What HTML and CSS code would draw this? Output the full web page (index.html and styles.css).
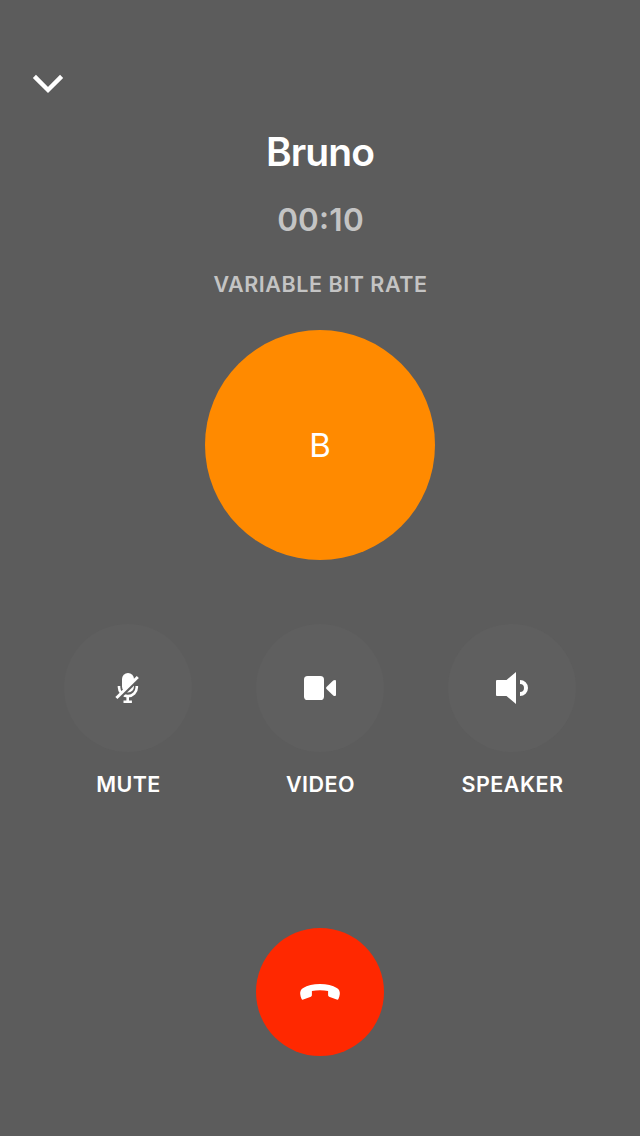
FILE: index.html
```html
<!DOCTYPE html>
<html lang="en">
<head>
<meta charset="utf-8">
<title>Call</title>
<link rel="stylesheet" href="styles.css">
</head>
<body>
<main class="call">
  <button class="minimize" aria-label="Minimize">
    <svg width="32" height="20" viewBox="0 0 32 20"><path d="M2.4 2.4 16 16 29.6 2.4" fill="none" stroke="#fff" stroke-width="4.4"/></svg>
  </button>
  <h1 class="name">Bruno</h1>
  <p class="timer">00<span class="colon">:</span>10</p>
  <p class="bitrate">VARIABLE BIT RATE</p>
  <div class="avatar">B</div>
  <div class="controls">
    <div class="control">
      <button class="round" aria-label="Mute">
        <svg width="56" height="56" viewBox="0 0 56 56">
          <defs><mask id="slash-gap"><rect width="56" height="56" fill="#fff"/><path d="M15 42.3 41 16.7" stroke="#000" stroke-width="3"/></mask></defs>
          <g mask="url(#slash-gap)">
            <rect x="22" y="13" width="12" height="19.5" rx="6" fill="#fff"/>
            <path d="M19 26v1.2a8.8 8.8 0 0 0 17.8 0V26" fill="none" stroke="#fff" stroke-width="2.6"/>
          </g>
          <path d="M27.7 36v5M23.5 41.7h8.4" fill="none" stroke="#fff" stroke-width="2.6"/>
          <path d="M16.4 38 37.8 17" stroke="#fff" stroke-width="3"/>
        </svg>
      </button>
      <span class="label">MUTE</span>
    </div>
    <div class="control">
      <button class="round" aria-label="Video">
        <svg width="56" height="56" viewBox="0 0 56 56" fill="#fff">
          <rect x="12" y="16" width="20" height="24" rx="3.6"/>
          <path d="M34.5 27 41.2 20.6Q42 20 43 20q1 0 1 1.2v13.6Q44 36 43 36q-1 0-1.8-.6L34.5 29q-1-1 0-2z"/>
        </svg>
      </button>
      <span class="label">VIDEO</span>
    </div>
    <div class="control">
      <button class="round" aria-label="Speaker">
        <svg width="56" height="56" viewBox="0 0 56 56">
          <path d="M13 20h9.5L32 12v32l-9.5-8H13q-1 0-1-1V21q0-1 1-1z" fill="#fff"/>
          <path d="M36 22a6 6 0 0 1 0 12" fill="none" stroke="#fff" stroke-width="4"/>
        </svg>
      </button>
      <span class="label">SPEAKER</span>
    </div>
  </div>
  <button class="round hangup" aria-label="End call">
    <svg width="60" height="44" viewBox="0 0 60 44"><path d="M10.2 24c-.3-2.5.8-4.8 3-6 4-2.6 10-4 16.8-4s12.800 1.400 16.800 4c2.200 1.200 3.300 3.500 3 6-.1 1.600-.7 3.200-1.300 4.800q-.5 1.300-1.800.8l-7.600-2.900q-1-.4-1-1.400v-4.200c-5-1.300-11.200-1.300-16.200 0v4.200q0 1-1 1.400l-7.600 2.900q-1.300.5-1.800-.8c-.6-1.600-1.200-3.200-1.300-4.800z" fill="#fff"/></svg>
  </button>
</main>
</body>
</html>
```
FILE: styles.css
```css
* { box-sizing: border-box; }
body { margin: 0; background: #5c5c5c; }
.call {
  height: 1136px;
  display: flex;
  flex-direction: column;
  align-items: center;
  padding-top: 74px;
  color: #fff;
  font-family: Inter, "Liberation Sans", sans-serif;
}
button { padding: 0; border: 0; background: none; color: inherit; }
svg { display: block; }
.minimize { align-self: flex-start; margin-left: 32px; height: 20px; }
.name { margin: 34px 0 0; font-size: 39px; line-height: 48px; font-weight: 600; letter-spacing: -0.9px; }
.timer { margin: 24px 0 0; padding-left: 1px; font-size: 31.5px; line-height: 40px; font-weight: 600; letter-spacing: 0.2px; color: #c4c4c4; }
.colon { position: relative; top: -2px; }
.bitrate { margin: 30px 0 0; padding-left: 1px; font-size: 21.5px; line-height: 28px; font-weight: 600; letter-spacing: 0.55px; color: #c4c4c4; }
.avatar {
  width: 230px;
  height: 230px;
  margin-top: 32px;
  border-radius: 50%;
  background: #ff8a00;
  display: grid;
  place-items: center;
  font-size: 33px;
  line-height: 40px;
}
.controls { display: flex; gap: 64px; margin-top: 64px; }
.control { width: 128px; display: flex; flex-direction: column; align-items: center; }
.round {
  width: 128px;
  height: 128px;
  border-radius: 50%;
  background: #5f5f5f;
  display: grid;
  place-items: center;
}
.label { margin-top: 18px; padding-left: 1px; font-size: 21.5px; line-height: 28px; font-weight: 600; letter-spacing: 0.45px; }
.hangup { margin-top: 130px; background: #ff2800; }
```
